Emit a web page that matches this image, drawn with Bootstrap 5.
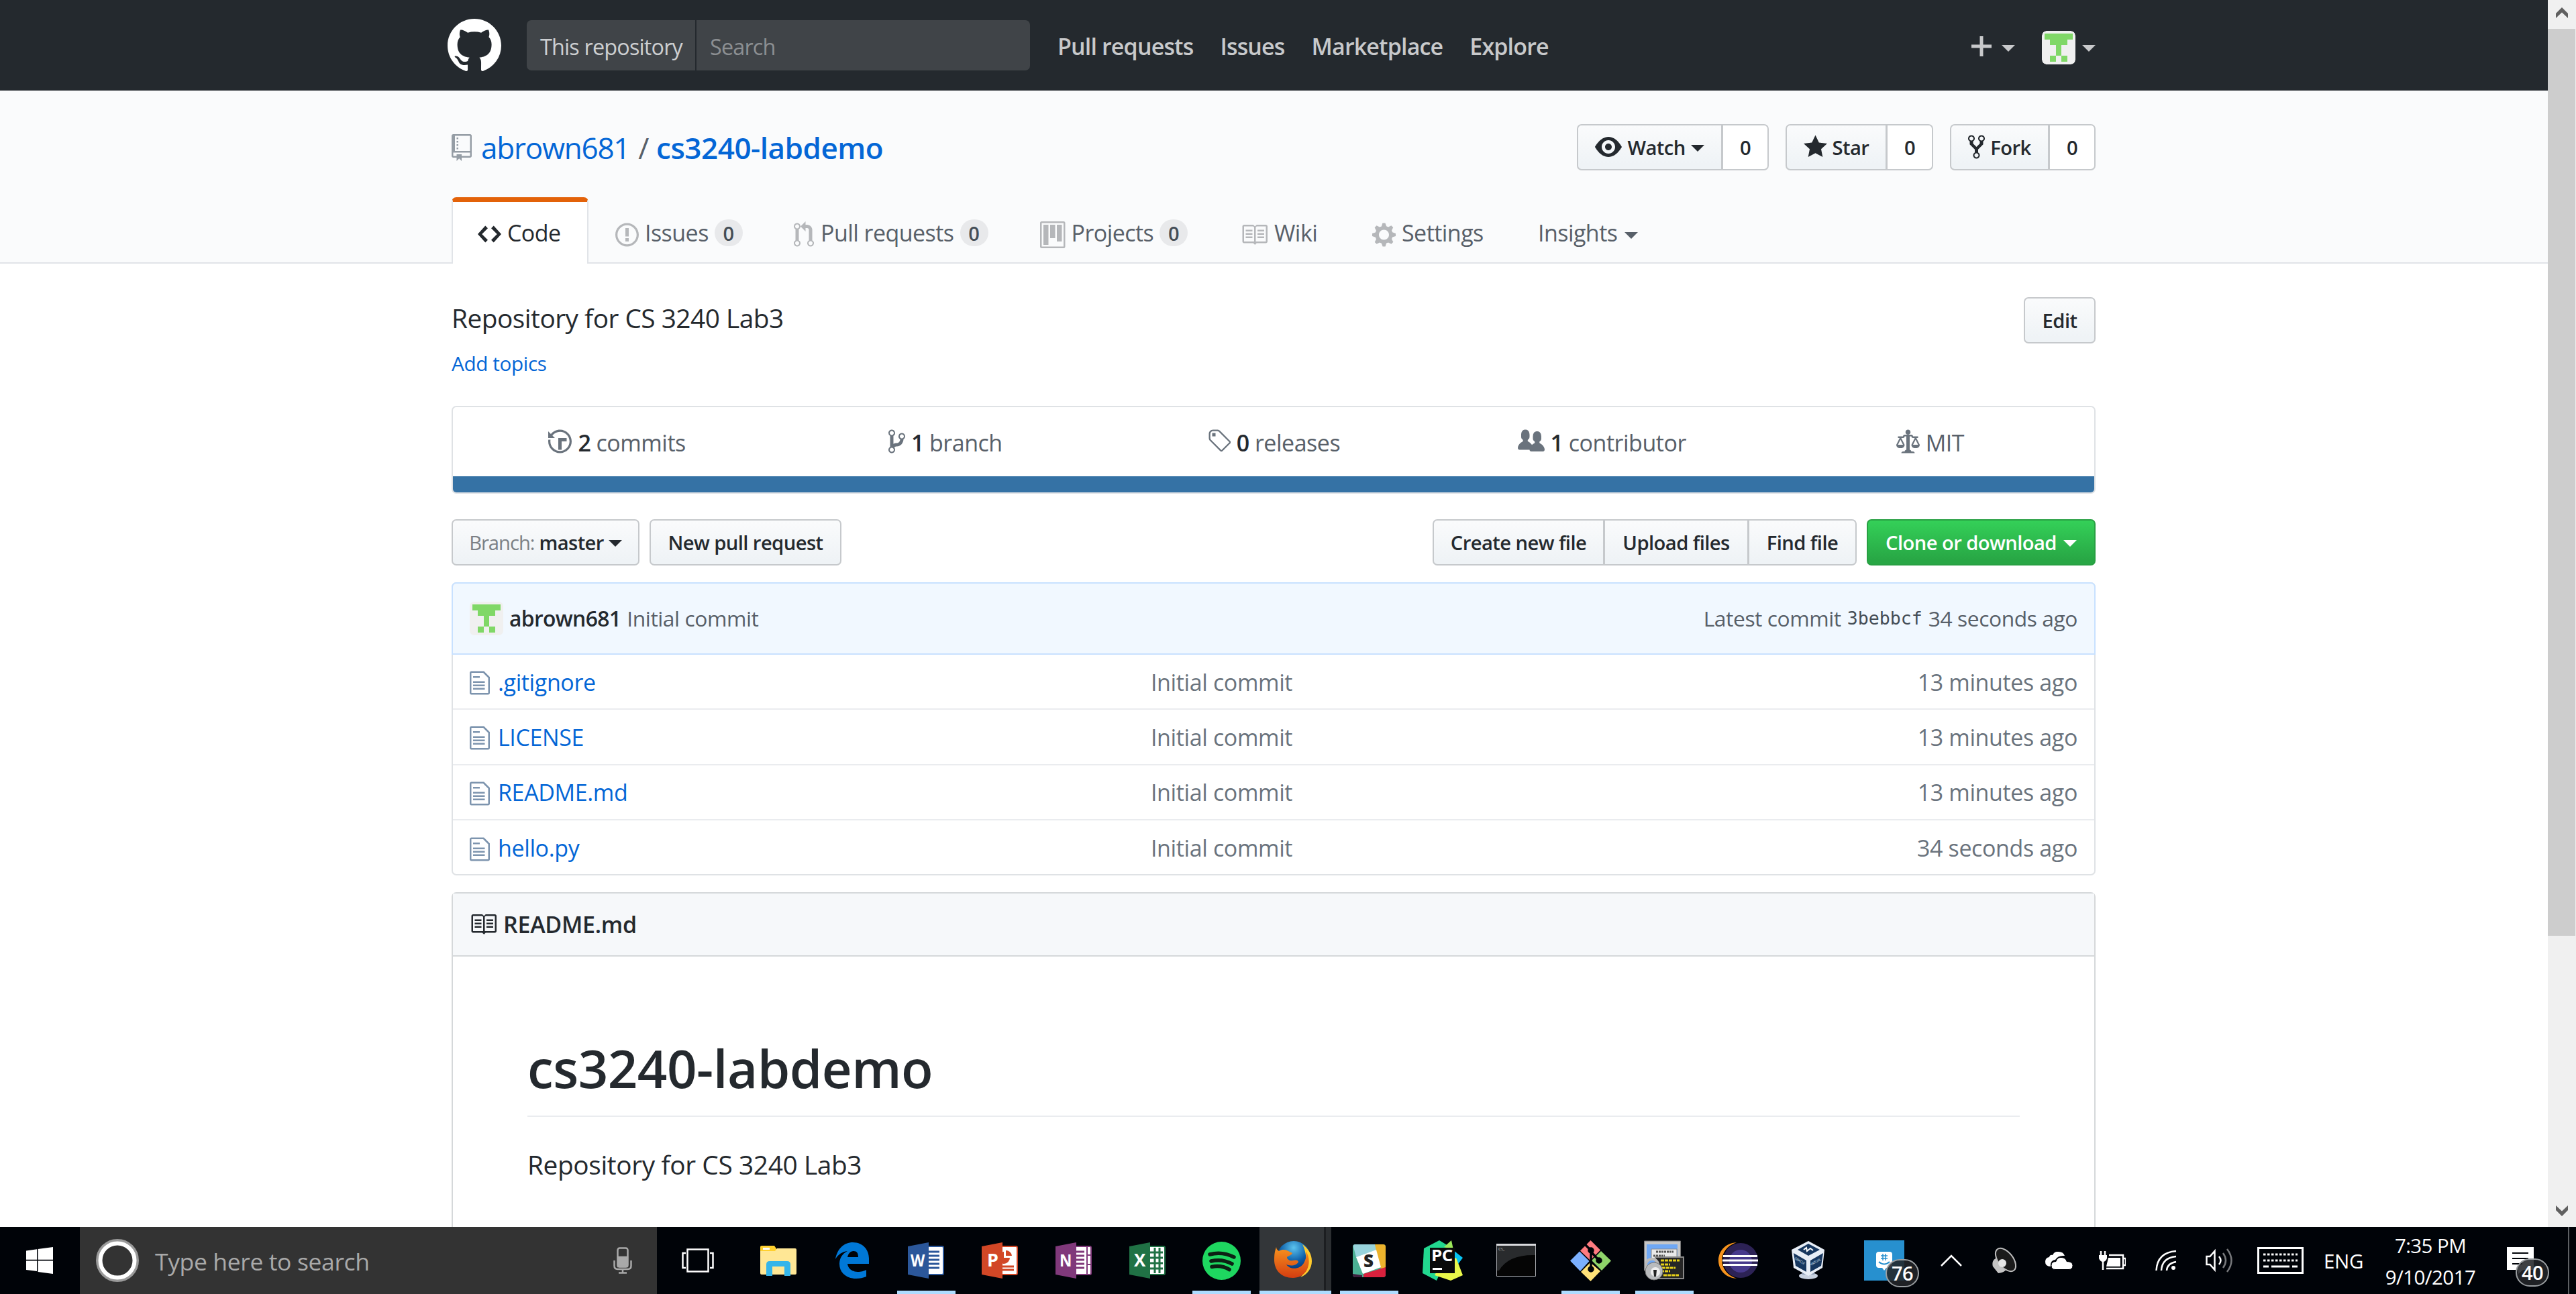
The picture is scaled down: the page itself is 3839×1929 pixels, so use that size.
<!DOCTYPE html>
<html lang="en">
<head>
<meta charset="utf-8">
<title>abrown681/cs3240-labdemo: Repository for CS 3240 Lab3</title>
<link rel="stylesheet" href="https://cdn.jsdelivr.net/npm/bootstrap@5.3.0/dist/css/bootstrap.min.css">
<style>
html,body{height:1929px;overflow:hidden}
body{font-family:"Open Sans","Noto Sans",sans-serif;font-size:34px;line-height:1.5;letter-spacing:-.011em;color:#24292e;background:#fff;white-space:nowrap}
a{text-decoration:none;color:#0366d6}
svg{display:block;flex:none}
svg:not([fill]){fill:currentColor}
.fw-semibold,.btn{letter-spacing:-.02em}
.viewport-area{height:1829px}
.wrap{width:2450px;margin:0 auto 0 673px}
.topbar{height:135px;background:#24292e;color:#c8c9cb}
.topbar-in{width:2460px;margin:0 auto 0 667px;padding-right:4px}
.searchbox{width:750px;height:75px;margin-left:38px;background:#404448;border-radius:7px;font-size:32.4px;letter-spacing:-.026em}
.scope{width:253px;padding:3px 0 0 20px;border-right:2px solid #24292e;color:#cdcfd1}
.query{padding:3px 0 0 20px;color:#8c8f92}
.topnav{margin-left:41px;gap:40px;padding-top:4px}
.topnav.fw-semibold{letter-spacing:-.025em}
.tri{width:0;height:0;border:10px solid transparent;border-top-color:currentColor;border-bottom:0;flex:none}
.face{border-radius:7px}
.repohead{height:258px;background:#fafbfc;border-bottom:2px solid #e1e4e8;padding-top:50px}
.titlerow{height:69px}
.title{font-size:44px;margin-left:14px}
.t-owner{letter-spacing:-.028em}
.t-sep{margin:0 11px 0 13px;color:#586069}
.t-repo.fw-semibold{letter-spacing:-.011em}
.btn{--bs-btn-font-size:29.2px;--bs-btn-font-weight:600;--bs-btn-color:#24292e;--bs-btn-border-color:#c6c9cc;--bs-btn-border-width:2px;--bs-btn-border-radius:7px;--bs-btn-padding-x:0;--bs-btn-padding-y:0;height:69px;padding-top:2px;background:linear-gradient(#fafbfc,#eff3f6 90%);display:flex;align-items:center;justify-content:center;line-height:1}
.btn svg{margin-bottom:3px}
.btn-group>.btn{flex:none}
.btn-tally{background:#fff}
.btn-go{--bs-btn-color:#fff;--bs-btn-border-color:#28a043;background:linear-gradient(#34d058,#28a745 90%)}
.tabs{margin-top:40px;height:99px;color:#586069;letter-spacing:-.016em}
.tab{height:99px;padding-top:7px}
.tab svg{margin-top:6px;color:#b5b7ba}
.tab-on{width:204px;background:#fff;border:2px solid #e1e4e8;border-top:7px solid #e36209;border-bottom:0;border-radius:7px 7px 0 0;padding-top:0;color:#24292e;padding-left:37px}
.tab-on svg{color:#24292e;margin-top:3px}
.tally{width:42px;height:40px;border-radius:20px;background:#e8e9eb;font-size:29px;font-weight:600;line-height:41px;text-align:center;color:#444d56;letter-spacing:0;margin-left:9px}
.about{margin-top:50px;height:69px}
.about-text{font-size:38.8px;line-height:63px;letter-spacing:-.013em}
.topics{font-size:29.7px;line-height:41px;height:40px;margin-top:9px}
.summary{margin-top:44px;height:131px;border:2px solid #dfe2e5;border-radius:7px;overflow:hidden;color:#586069;letter-spacing:-.014em}
.summary svg{margin:3px 9px 0 0;color:#6a737d}
.statline{padding-top:4px}
.langbar{height:24px;background:#3572a5}
.ink{color:#24292e}
.toolrow{margin:38px 0 25px}
.files{border:2px solid #dfe2e5;border-radius:7px;height:437px;color:#6a737d}
.tease{height:108px;margin:-2px -2px 0;background:#f1f8ff;border:2px solid #c8e1ff;border-radius:7px 7px 0 0;padding:0 25px;color:#586069;font-size:31.8px;letter-spacing:-.014em}
.tease>span,.tease>code{padding-bottom:1px}
.tease code{font-family:"DejaVu Sans Mono","Liberation Mono",monospace;font-size:26.6px;letter-spacing:0;color:#444d56}
.frow{height:82.25px;border-bottom:2px solid #eaecef;padding:2px 25px 0}
.frow:last-child{border:0}
.fname{width:1015px;gap:12px}
.fname svg{color:#7d94ae;margin-top:2px}
.readme{margin-top:25px;border:2px solid #d5d8da;border-radius:7px;height:700px}
.readme-h{height:94px;background:#f6f8fa;border-bottom:2px solid #d5d8da;padding-left:25px;gap:10px}
.readme-h.fw-semibold{letter-spacing:-.008em}
.readme-b{padding:116px 111px}
.readme-b h1{font-size:78px;font-weight:600;line-height:100px;height:123px;border-bottom:2px solid #eaecef;margin:0 0 43px;letter-spacing:-.0065em}
.readme-b p{font-size:38.8px;line-height:56px}
.scroller{width:42px;background:#f0f0f0;color:#606060}
.scroller i{width:41px;height:1352px;background:#cdcdcd}
.arrowbox{width:41px;height:43px;padding-bottom:5px}
.taskbar{height:100px;background:#000308;color:#fff}
.start{width:119px}
.cortana{width:860px;background:#333;color:#a9a9a9;font-size:35.5px;padding:0 37px 0 24px}
.app{width:110px;height:100px}
.app.run{background:linear-gradient(#aedcff,#aedcff) 12px 95px/87px 5px no-repeat}
.running{height:5px;background:#aedcff}
.cell{height:100px}
.apps{margin-left:6px}
.front{width:107px;background:linear-gradient(90deg,#333639 0 96px,#1c1e21 96px 99px,#2b2e31 99px)}
.clock{line-height:47px;font-size:29.5px;text-align:center;width:170px;letter-spacing:-.02em}
.bubble{position:absolute;height:42px;border:2px solid #9a9ea1;border-radius:21px;background:rgba(35,38,41,.88);font-size:29px;line-height:37px;font-weight:600;text-align:center;width:50px;letter-spacing:-.02em}
.s80{width:80px}
</style>
</head>
<body>
<svg width="0" height="0" class="position-absolute">
<defs>
<symbol id="book" viewBox="0 0 16 16"><path d="M3 5h4v1H3V5zm0 3h4V7H3v1zm0 2h4V9H3v1zm11-5h-4v1h4V5zm0 2h-4v1h4V7zm0 2h-4v1h4V9zm2-6v9c0 .55-.45 1-1 1H9.5l-1 1-1-1H2c-.55 0-1-.45-1-1V3c0-.55.45-1 1-1h5.5l1 1 1-1H15c.55 0 1 .45 1 1zm-8 .5L7.5 3H2v9h6V3.5zm7-.5H9.5l-.5.5V12h6V3z"/></symbol>
<symbol id="file" viewBox="0 0 12 16"><path d="M6 5H2V4h4v1zM2 8h7V7H2v1zm0 2h7V9H2v1zm0 2h7v-1H2v1zm10-7.5V14c0 .55-.45 1-1 1H1c-.55 0-1-.45-1-1V2c0-.55.45-1 1-1h7.5L12 4.5zM11 5L8 2H1v12h10V5z"/></symbol>
<symbol id="face" viewBox="0 0 50 50"><rect width="50" height="50" rx="7" fill="#f0f0f0"/><path fill="#80d867" d="M4 4h42v9h-8v8h-9v16h9v9h-9v-9h-8v9h-9v-9h9V21h-9v-8H4z"/></symbol>
</defs>
</svg>
<div class="viewport-area d-flex">
<div class="flex-grow-1 overflow-hidden">
<header class="topbar d-flex">
<div class="topbar-in d-flex align-items-center">
<svg width="80" height="80" viewBox="0 0 16 16" fill="#fff"><path d="M8 0C3.58 0 0 3.58 0 8c0 3.54 2.29 6.53 5.47 7.59.4.07.55-.17.55-.38 0-.19-.01-.82-.01-1.49-2.01.37-2.53-.49-2.69-.94-.09-.23-.48-.94-.82-1.13-.28-.15-.68-.52-.01-.53.63-.01 1.08.58 1.23.82.72 1.21 1.87.87 2.33.66.07-.52.28-.87.51-1.07-1.78-.2-3.64-.89-3.64-3.95 0-.87.31-1.59.82-2.15-.08-.2-.36-1.02.08-2.12 0 0 .67-.21 2.2.82.64-.18 1.32-.27 2-.27.68 0 1.36.09 2 .27 1.53-1.04 2.2-.82 2.2-.82.44 1.1.16 1.92.08 2.12.51.56.82 1.27.82 2.15 0 3.07-1.87 3.75-3.65 3.95.29.25.54.73.54 1.48 0 1.07-.01 1.93-.01 2.2 0 .21.15.46.55.38A8.013 8.013 0 0 0 16 8c0-4.42-3.58-8-8-8z"/></svg>
<div class="searchbox d-flex align-items-stretch">
<div class="scope d-flex align-items-center">This repository</div>
<div class="query d-flex align-items-center">Search</div>
</div>
<nav class="topnav d-flex fw-semibold"><span>Pull requests</span><span>Issues</span><span>Marketplace</span><span>Explore</span></nav>
<div class="ms-auto d-flex align-items-center">
<svg style="margin-top:3px" width="30" height="40" viewBox="0 0 12 16"><path d="M12 9H7v5H5V9H0V7h5V2h2v5h5z"/></svg>
<span class="tri mt-2" style="margin-left:15px"></span>
<svg class="face" style="margin:6px 10px 0 40px" width="50" height="50"><use href="#face"/></svg>
<span class="tri mt-2"></span>
</div>
</div>
</header>
<section class="repohead">
<div class="wrap">
<div class="titlerow d-flex align-items-center">
<svg width="30" height="40" viewBox="0 0 12 16" fill="#959da5"><path d="M4 9H3V8h1v1zm0-3H3v1h1V6zm0-2H3v1h1V4zm0-2H3v1h1V2zm8-1v12c0 .55-.45 1-1 1H6v2l-1.5-1.5L3 16v-2H1c-.55 0-1-.45-1-1V1c0-.55.45-1 1-1h10c.55 0 1 .45 1 1zm-1 10H1v2h2v-1h3v1h5v-2zm0-10H2v9h9V1z"/></svg>
<div class="title d-flex"><a href="#" class="t-owner">abrown681</a><span class="t-sep">/</span><a href="#" class="t-repo fw-semibold">cs3240-labdemo</a></div>
<div class="ms-auto d-flex" style="gap:25px">
<div class="btn-group"><button class="btn" style="width:217px;gap:8px"><svg width="40" height="40" viewBox="0 0 16 16"><path d="M8.06 2C3 2 0 8 0 8s3 6 8.06 6C13 14 16 8 16 8s-3-6-7.94-6zM8 12c-2.2 0-4-1.78-4-4 0-2.2 1.8-4 4-4 2.22 0 4 1.8 4 4 0 2.22-1.78 4-4 4zm2-4c0 1.11-.89 2-2 2-1.11 0-2-.89-2-2 0-1.11.89-2 2-2 1.11 0 2 .89 2 2z"/></svg>Watch<span class="tri"></span></button><button class="btn btn-tally" style="width:70px">0</button></div>
<div class="btn-group"><button class="btn" style="width:151px;gap:8px"><svg width="35" height="40" viewBox="0 0 14 16"><path d="M14 6l-4.9-.64L7 1 4.9 5.36 0 6l3.6 3.26L2.67 14 7 11.67 11.33 14l-.93-4.74z"/></svg>Star</button><button class="btn btn-tally" style="width:70px">0</button></div>
<div class="btn-group"><button class="btn" style="width:148px;gap:8px"><svg width="25" height="40" viewBox="0 0 10 16"><path d="M8 1a1.993 1.993 0 0 0-1 3.72V6L5 8 3 6V4.72A1.993 1.993 0 0 0 2 1a1.993 1.993 0 0 0-1 3.72V6.5l3 3v1.78A1.993 1.993 0 0 0 5 15a1.993 1.993 0 0 0 1-3.72V9.5l3-3V4.72A1.993 1.993 0 0 0 8 1zM2 4.2C1.34 4.2.8 3.65.8 3c0-.65.55-1.2 1.2-1.2.65 0 1.2.55 1.2 1.2 0 .65-.55 1.2-1.2 1.2zm3 10c-.66 0-1.2-.55-1.2-1.2 0-.65.55-1.2 1.2-1.2.65 0 1.2.55 1.2 1.2 0 .65-.55 1.2-1.2 1.2zm3-10c-.66 0-1.2-.55-1.2-1.2 0-.65.55-1.2 1.2-1.2.65 0 1.2.55 1.2 1.2 0 .65-.55 1.2-1.2 1.2z"/></svg>Fork</button><button class="btn btn-tally" style="width:70px">0</button></div>
</div>
</div>
<nav class="tabs d-flex">
<div class="tab tab-on d-flex align-items-center"><svg width="35" height="40" viewBox="0 0 14 16" style="margin-right:9px"><path d="M9.5 3L8 4.5 11.5 8 8 11.5 9.5 13 14 8 9.5 3zm-5 0L0 8l4.5 5L6 11.5 2.5 8 6 4.5 4.5 3z"/></svg>Code</div>
<div class="tab d-flex align-items-center" style="width:266px;padding-left:40px"><svg width="35" height="40" viewBox="0 0 14 16" style="margin-right:9px"><path d="M7 2.3c3.14 0 5.7 2.56 5.7 5.7s-2.56 5.7-5.7 5.7A5.71 5.71 0 0 1 1.3 8c0-3.14 2.56-5.7 5.7-5.7zM7 1C3.14 1 0 4.14 0 8s3.14 7 7 7 7-3.14 7-7-3.14-7-7-7zm1 3H6v5h2V4zm0 6H6v2h2v-2z"/></svg>Issues<span class="tally">0</span></div>
<div class="tab d-flex align-items-center" style="width:367px;padding-left:40px"><svg width="30" height="40" viewBox="0 0 12 16" style="margin-right:10px"><path d="M11 11.28V5c-.03-.78-.34-1.47-.94-2.06C9.46 2.35 8.78 2.03 8 2H7V0L4 3l3 3V4h1c.27.02.48.11.69.31.21.2.3.42.31.69v6.28A1.993 1.993 0 0 0 10 15a1.993 1.993 0 0 0 1-3.72zm-1 2.92c-.66 0-1.2-.55-1.2-1.2 0-.65.55-1.2 1.2-1.2.65 0 1.2.55 1.2 1.2 0 .65-.55 1.2-1.2 1.2zM4 3c0-1.11-.89-2-2-2a1.993 1.993 0 0 0-1 3.72v6.56A1.993 1.993 0 0 0 2 15a1.993 1.993 0 0 0 1-3.72V4.72c.59-.34 1-.98 1-1.72zm-.8 10c0 .66-.55 1.2-1.2 1.2-.65 0-1.2-.55-1.2-1.2 0-.65.55-1.2 1.2-1.2.65 0 1.2.55 1.2 1.2zM2 4.2C1.34 4.2.8 3.65.8 3c0-.65.55-1.2 1.2-1.2.65 0 1.2.55 1.2 1.2 0 .65-.55 1.2-1.2 1.2z"/></svg>Pull requests<span class="tally">0</span></div>
<div class="tab d-flex align-items-center" style="width:301px;padding-left:40px"><svg width="37.5" height="40" viewBox="0 0 15 16" style="margin-right:9px"><path fill-rule="evenodd" d="M10 12h3V2h-3v10zm-4-2h3V2H6v8zm-4 4h3V2H2v12zm-1 1h13V1H1v14zM14 0H1a1 1 0 0 0-1 1v14a1 1 0 0 0 1 1h13a1 1 0 0 0 1-1V1a1 1 0 0 0-1-1z"/></svg>Projects<span class="tally">0</span></div>
<div class="tab d-flex align-items-center" style="width:195px;padding-left:38px"><svg width="40" height="40" style="margin-right:10px"><use href="#book"/></svg>Wiki</div>
<div class="tab d-flex align-items-center" style="width:247px;padding-left:39px"><svg width="35" height="40" viewBox="0 0 14 16" style="margin-right:9px"><path d="M14 8.77v-1.6l-1.94-.64-.45-1.09.88-1.84-1.13-1.13-1.81.91-1.09-.45-.69-1.92h-1.6l-.63 1.94-1.11.45-1.84-.88-1.13 1.13.91 1.81-.45 1.09L0 7.23v1.59l1.94.64.45 1.09-.88 1.84 1.13 1.13 1.81-.91 1.09.45.69 1.92h1.59l.63-1.94 1.11-.45 1.84.88 1.13-1.13-.92-1.81.47-1.09L14 8.75v.02zM7 11c-1.66 0-3-1.34-3-3s1.34-3 3-3 3 1.34 3 3-1.34 3-3 3z"/></svg>Settings</div>
<div class="tab d-flex align-items-center" style="padding-left:39px;gap:11px">Insights<span class="tri mt-2"></span></div>
</nav>
</div>
</section>
<main class="wrap">
<div class="about d-flex justify-content-between"><div class="about-text">Repository for CS 3240 Lab3</div><button class="btn" style="width:107px">Edit</button></div>
<div class="topics"><a href="#">Add topics</a></div>
<div class="summary d-flex flex-column">
<div class="statline d-flex flex-grow-1 align-items-center text-center">
<div class="d-flex w-100 justify-content-center"><svg width="35" height="40" viewBox="0 0 14 16"><path d="M8 13H6V6h5v2H8v5zM7 1C4.81 1 2.87 2.02 1.59 3.59L0 2v4h4L2.5 4.5C3.55 3.17 5.17 2.3 7 2.3c3.14 0 5.7 2.56 5.7 5.7s-2.56 5.7-5.7 5.7A5.71 5.71 0 0 1 1.3 8c0-.34.03-.67.09-1H.08C.03 7.33 0 7.66 0 8c0 3.86 3.14 7 7 7s7-3.14 7-7-3.14-7-7-7z"/></svg><span><b class="ink fw-semibold">2</b> commits</span></div>
<div class="d-flex w-100 justify-content-center"><svg width="25" height="40" viewBox="0 0 10 16"><path d="M10 5c0-1.11-.89-2-2-2a1.993 1.993 0 0 0-1 3.72v.3c-.02.52-.23.98-.63 1.38-.4.4-.86.61-1.38.63-.83.02-1.48.16-2 .45V4.72a1.993 1.993 0 0 0-1-3.72C.88 1 0 1.89 0 3a2 2 0 0 0 1 1.72v6.56c-.59.35-1 .99-1 1.72 0 1.11.89 2 2 2 1.11 0 2-.89 2-2 0-.53-.2-1-.53-1.36.09-.06.48-.41.59-.47.25-.11.56-.17.94-.17 1.05-.05 1.95-.45 2.75-1.25S8.95 7.77 9 6.73h-.02C9.59 6.37 10 5.73 10 5zM2 1.8c.66 0 1.2.55 1.2 1.2 0 .65-.55 1.2-1.2 1.2C1.35 4.2.8 3.65.8 3c0-.65.55-1.2 1.2-1.2zm0 12.41c-.66 0-1.2-.55-1.2-1.2 0-.65.55-1.2 1.2-1.2.65 0 1.2.55 1.2 1.2 0 .65-.55 1.2-1.2 1.2zm6-8c-.66 0-1.2-.55-1.2-1.2 0-.65.55-1.2 1.2-1.2.65 0 1.2.55 1.2 1.2 0 .65-.55 1.2-1.2 1.2z"/></svg><span><b class="ink fw-semibold">1</b> branch</span></div>
<div class="d-flex w-100 justify-content-center"><svg width="35" height="40" viewBox="0 0 14 16"><path d="M7.73 1.73C7.26 1.26 6.62 1 5.96 1H3.5C2.13 1 1 2.13 1 3.5v2.47c0 .66.27 1.3.73 1.77l6.06 6.06c.39.39 1.02.39 1.41 0l4.59-4.59a.996.996 0 0 0 0-1.41L7.73 1.73zM2.38 7.09c-.31-.3-.47-.7-.47-1.13V3.5c0-.88.72-1.59 1.59-1.59h2.47c.42 0 .83.16 1.13.47l6.14 6.13-4.73 4.73-6.13-6.15zM3.01 3h2v2H3V3h.01z"/></svg><span><b class="ink fw-semibold">0</b> releases</span></div>
<div class="d-flex w-100 justify-content-center"><svg width="40" height="40" viewBox="0 0 16 16"><path d="M16 12.999c0 .439-.45 1-1 1H7.995c-.539 0-.994-.447-.995-.999H1c-.54 0-1-.561-1-1 0-2.634 3-4 3-4s.229-.409 0-1c-.841-.621-1.058-.59-1-3 .058-2.419 1.367-3 2.5-3s2.442.58 2.5 3c.058 2.41-.159 2.379-1 3-.229.59 0 1 0 1s1.549.711 2.42 2.088C9.196 9.369 10 8.999 10 8.999s.229-.409 0-1c-.841-.62-1.058-.59-1-3 .058-2.419 1.367-3 2.5-3s2.437.581 2.495 3c.059 2.41-.158 2.38-1 3-.229.59 0 1 0 1s3.005 1.366 3.005 4"/></svg><span><b class="ink fw-semibold">1</b> contributor</span></div>
<div class="d-flex w-100 justify-content-center"><svg width="35" height="40" viewBox="0 0 14 16"><path d="M7 4c-.83 0-1.5-.67-1.5-1.5S6.17 1 7 1s1.5.67 1.5 1.5S7.83 4 7 4zm7 6c0 1.11-.89 2-2 2h-1c-1.11 0-2-.89-2-2l2-4h-1c-.55 0-1-.45-1-1H8v8c.42 0 1 .45 1 1h1c.42 0 1 .45 1 1H3c0-.55.58-1 1-1h1c0-.55.58-1 1-1h.03L6 5H5c0 .55-.45 1-1 1H3l2 4c0 1.11-.89 2-2 2H2c-1.11 0-2-.89-2-2l2-4H1V5h3c0-.55.45-1 1-1h4c.55 0 1 .45 1 1h3v1h-1l2 4zM2.5 7L1 10h3L2.5 7zM13 10l-1.5-3-1.5 3h3z"/></svg><span>MIT</span></div>
</div>
<div class="langbar"></div>
</div>
<div class="toolrow d-flex">
<button class="btn" style="width:280px;gap:7px"><span class="fw-normal" style="color:#7b8085;letter-spacing:-.035em">Branch:</span>master<span class="tri"></span></button>
<button class="btn" style="width:286px;margin-left:15px">New pull request</button>
<div class="btn-group ms-auto"><button class="btn" style="width:256px">Create new file</button><button class="btn" style="width:216px">Upload files</button><button class="btn" style="width:162px">Find file</button></div>
<button class="btn btn-go" style="width:341px;margin-left:15px;gap:10px">Clone or download<span class="tri"></span></button>
</div>
<div class="files">
<div class="tease d-flex align-items-center"><svg width="50" height="50" style="margin-right:9px"><use href="#face"/></svg><span class="ink fw-semibold">abrown681</span><span style="margin-left:9px">Initial commit</span><span class="ms-auto">Latest commit</span><code style="margin:0 9px">3bebbcf</code><span>34 seconds ago</span></div>
<div class="frow d-flex align-items-center"><div class="fname d-flex align-items-center"><svg width="30" height="40"><use href="#file"/></svg><a href="#">.gitignore</a></div><span>Initial commit</span><span class="ms-auto">13 minutes ago</span></div>
<div class="frow d-flex align-items-center"><div class="fname d-flex align-items-center"><svg width="30" height="40"><use href="#file"/></svg><a href="#">LICENSE</a></div><span>Initial commit</span><span class="ms-auto">13 minutes ago</span></div>
<div class="frow d-flex align-items-center"><div class="fname d-flex align-items-center"><svg width="30" height="40"><use href="#file"/></svg><a href="#">README.md</a></div><span>Initial commit</span><span class="ms-auto">13 minutes ago</span></div>
<div class="frow d-flex align-items-center"><div class="fname d-flex align-items-center"><svg width="30" height="40"><use href="#file"/></svg><a href="#">hello.py</a></div><span>Initial commit</span><span class="ms-auto">34 seconds ago</span></div>
</div>
<div class="readme">
<div class="readme-h d-flex align-items-center fw-semibold"><svg width="40" height="40"><use href="#book"/></svg>README.md</div>
<div class="readme-b"><h1>cs3240-labdemo</h1><p>Repository for CS 3240 Lab3</p></div>
</div>
</main>
</div>
<div class="scroller d-flex flex-column">
<div class="arrowbox d-flex align-items-center justify-content-center"><svg width="18" height="16"><path d="M0 9l9-9 9 9v7L9 7.500 0 16z"/></svg></div>
<i></i>
<div class="arrowbox d-flex align-items-center justify-content-center mt-auto"><svg width="18" height="16"><path d="M0 0l9 8.500L18 0v7l-9 9-9-9z"/></svg></div>
</div>
</div>
<footer class="taskbar d-flex">
<div class="start d-flex align-items-center justify-content-center" style="padding-right:1px"><svg width="40" height="40"><path d="M0 5.500L16 3.300V18.800H0zM17.500 3L40 0V18.800H17.500zM0 20.500H16V36L0 34zM17.500 20.500H40V40L17.500 37z"/></svg></div>
<div class="cortana d-flex align-items-center"><svg width="64" height="66" fill="none"><circle cx="32" cy="33" r="29.500" stroke="#9a9a9a" stroke-width="5"/><circle cx="32" cy="33" r="25.500" stroke="#fff" stroke-width="6"/></svg><span style="margin-left:24px;padding-top:3px">Type here to search</span>
<svg class="ms-auto" width="28" height="40" fill="none" stroke="#a9a9a9" stroke-width="2.500"><rect x="6.500" y="1.500" width="15" height="28" rx="3"/><path fill="#a9a9a9" d="M7 15h14v14H7z"/><path d="M1.500 20v8q0 5 5 5h15q5 0 5-5v-8M14 33v5M8 38.500h12"/></svg></div>
<div class="apps d-flex">
<div class="app d-flex align-items-center justify-content-center" style="margin-right:10px"><svg width="48" height="36" fill="none" stroke="#fff" stroke-width="2.500"><path d="M8.500 1.500h31v33h-31zM6 7H1.500v22H6M42 7h4.500v22H42"/></svg></div>
<div class="app d-flex align-items-center justify-content-center"><svg width="54" height="46"><path fill="#ffd02e" d="M0 3q0-2 2-2h19l4 6v6H0z"/><path fill="#fff" d="M4 4h10v3H4z"/><path fill="#ffe795" d="M0 9h22l3-4h27q2 0 2 2v35q0 2-2 2H2q-2 0-2-2z"/><path fill="#35b5ea" d="M9 46V29q0-5 5-5h26q5 0 5 5v17h-9V32H18v14z"/></svg></div>
<div class="app d-flex align-items-center justify-content-center"><svg width="50" height="54" viewBox="0 0 50 54" fill="#0078d7"><path d="M0 25C3 9 13 0 26 0c15 0 24 11 24 24v8H18c1 8 8 12 15 12 6 0 9-1 13-3v10c-5 2-9 3-15 3C16 54 6 45 6 32c0-8 4-15 12-19C10 14 4 18 0 25zm18-3h16c0-6-2-9-7-9s-8 4-9 9z"/></svg></div>
<div class="app run d-flex align-items-center justify-content-center"><svg width="54" height="54"><path fill="#fff" stroke="#2b579a" stroke-width="2" d="M28 6h23q2 0 2 2v38q0 2-2 2H28z"/><path stroke="#2b579a" stroke-width="3" d="M30 14h17M30 20h17M30 26h17M30 32h17M30 38h17"/><path fill="#2b579a" d="M0 6L31 0v54L0 48z"/><text x="4" y="36" font-size="25" font-weight="700" fill="#fff" textLength="21" lengthAdjust="spacingAndGlyphs">W</text></svg></div>
<div class="app d-flex align-items-center justify-content-center"><svg width="54" height="54"><path fill="#fff" stroke="#d24726" stroke-width="2" d="M28 6h23q2 0 2 2v38q0 2-2 2H28z"/><path stroke="#d24726" stroke-width="3" d="M31 36h17M31 41h17"/><path fill="#d24726" d="M33 14a9 9 0 1 0 9 9H33zM36 12v8h9a9 9 0 0 0-9-8z"/><path fill="#d24726" d="M0 6L31 0v54L0 48z"/><text x="8" y="36" font-size="27" font-weight="700" fill="#fff">P</text></svg></div>
<div class="app d-flex align-items-center justify-content-center"><svg width="54" height="54"><path fill="#fff" stroke="#80397b" stroke-width="2" d="M28 6h23q2 0 2 2v38q0 2-2 2H28z"/><path stroke="#80397b" stroke-width="3" d="M30 14h13M30 20h13M30 26h13M30 32h13M30 38h13"/><path stroke="#80397b" stroke-width="2" d="M47 6v42M47 19h6M47 33h6"/><path fill="#80397b" d="M0 6L31 0v54L0 48z"/><text x="6" y="36" font-size="25" font-weight="700" fill="#fff" textLength="18" lengthAdjust="spacingAndGlyphs">N</text></svg></div>
<div class="app d-flex align-items-center justify-content-center"><svg width="54" height="54"><path fill="#fff" stroke="#207245" stroke-width="2" d="M28 6h23q2 0 2 2v38q0 2-2 2H28z"/><path stroke="#207245" stroke-width="3" d="M30 15h20M30 23h20M30 31h20M30 39h20M38 8v38M45 8v38"/><path fill="#207245" d="M0 6L31 0v54L0 48z"/><text x="7" y="36" font-size="26" font-weight="700" fill="#fff">X</text></svg></div>
<div class="app run d-flex align-items-center justify-content-center"><svg width="57" height="57"><circle cx="28.500" cy="28.500" r="28.500" fill="#1ed760"/><path fill="none" stroke="#0d2014" stroke-linecap="round" stroke-width="5.500" d="M11 19q18-5 36 4M13 29q16-4 31 4M14 37.500q14-3 26 4"/></svg></div>
<div class="app d-flex" style="padding-left:2px"><div class="front d-flex flex-column"><svg style="margin:21px 0 0 22px" width="56" height="56"><defs><radialGradient id="ffb" cx=".5" cy=".2" r=".7"><stop offset="0" stop-color="#5cc3ee"/><stop offset=".6" stop-color="#0a5ca8"/><stop offset="1" stop-color="#0a2f6b"/></radialGradient><linearGradient id="ffo" x2="0" y2="1"><stop offset="0" stop-color="#f7931e"/><stop offset="1" stop-color="#d43d10"/></linearGradient></defs><circle cx="29" cy="25" r="25" fill="url(#ffb)"/><path fill="#ffcb2e" d="M42 5c9 6 14 15 14 25 0 10-6 20-17 24 8-8 11-16 9-26-1-8-2-15-6-23z"/><path fill="url(#ffo)" d="M3 9c0 3 2 5 4 6 5-3 10-2 14 0l6 3c-1 3-6 4-8 6 0 4 5 6 9 5 4-1 7-1 8 2-3 7-14 6-18 4 6 9 21 7 26-2 4-7 4-12 3-18 10 14 4 40-19 40C10 55 0 43 0 28 0 19 1 15 3 9z"/></svg><div class="running w-100 mt-auto"></div></div></div>
<div class="app run d-flex align-items-center justify-content-center"><svg width="49" height="49"><clipPath id="sl"><rect width="49" height="49" rx="4"/></clipPath><g clip-path="url(#sl)"><path fill="#4bb093" d="M0 0h49v49H0z"/><path fill="#98d4dc" d="M0 0h33l3 8L5 19z"/><path fill="#ecb32d" d="M33 0h16v40l-9-6z"/><path fill="#d9213d" d="M16 44l33-10v15H16z"/><path fill="#40203f" d="M0 44l14 2v3H0z"/><path fill="#fff" d="M5 19l30-11 7 26-27 10z"/></g><text x="16" y="34" font-size="26" font-weight="800" fill="#222">S</text></svg></div>
<div class="app d-flex align-items-center justify-content-center"><svg width="60" height="60"><path fill="#22d88f" d="M2 12L25 0l18 11-22 49L0 49z"/><path fill="#9ce85b" d="M32 10L43 0l3 14z"/><path fill="#07c3f2" d="M45 14l15 12-12 16z"/><path fill="#eaf84a" d="M50 26l10 26-18 8-24-8 8-14z"/><path fill="#0a0a0a" d="M11 11h37v38H11z"/><text x="13" y="31" font-size="24" font-weight="700" fill="#fff" textLength="32" lengthAdjust="spacingAndGlyphs">PC</text><path fill="#fff" d="M15 41h14v3H15z"/></svg></div>
<div class="app d-flex align-items-center justify-content-center"><svg width="60" height="50"><path fill="#050505" stroke="#a9abb0" d="M.5.5h58v48H.5z"/><path fill="#292b2d" d="M1 3h57v14Q18 16 4 40H1z"/><path fill="#d9dadd" d="M0 0h59v3H0z"/><text x="3" y="10" font-size="6" fill="#ccc">C:\_</text></svg></div>
<div class="app run d-flex align-items-center justify-content-center"><svg width="61" height="61"><path fill="#ff7b80" d="M15 15.500L30.500 0 45 14.500 30 30z"/><path fill="#7bb0ff" d="M14 16.500L28.500 31 15 46 0 30.500z"/><path fill="#8fd46a" d="M46 16l15 14.500L47 45 32 30z"/><path fill="#ffe278" d="M30 33l15 13-14.500 15L16 47z"/><g fill="#000308" stroke="#000308" stroke-width="3.500"><path fill="none" d="M22 6l9 9v27M31 17l12 13"/><circle cx="31" cy="15" r="3"/><circle cx="31" cy="43" r="3"/><circle cx="43" cy="30" r="3"/></g></svg></div>
<div class="app run d-flex align-items-center justify-content-center"><svg width="60" height="60"><path fill="#c6c6c6" stroke="#777" d="M.5 1h54v44H.5z"/><path fill="#6fa8f5" d="M4 6h46v36H4z"/><path fill="#e9e9e9" stroke="#888" d="M11 13h38v14H11z"/><path stroke="#555" stroke-width="3" stroke-dasharray="3 1" d="M18 17h26M14 23h17"/><path fill="#262626" stroke="#888" stroke-width="2" d="M17 25h42v32H17z"/><path stroke="#e6cf19" stroke-width="3" stroke-dasharray="5 1" d="M25 30h28M25 36h14M27 41h20M25 46h14M29 52h24"/><path fill="none" stroke="#bbb" stroke-width="4" d="M3 40v-5q2-7 9-7t9 7v8"/><circle cx="15" cy="46" r="13" fill="#b9bbbd" stroke="#777"/><circle cx="17" cy="47" r="7" fill="#eee"/><path fill="#222" d="M14 44h5l-1 10h-3z"/></svg></div>
<div class="app d-flex align-items-center justify-content-center"><svg width="59" height="54"><path fill="#f7941e" d="M27 0C-9 3-9 51 27 54-2 44-2 10 27 0z"/><circle cx="33" cy="27" r="26" fill="#2c2255"/><circle cx="33" cy="28" r="17" fill="#47398c"/><path stroke="#fff" stroke-width="3" d="M7 20.500h51M6 27h53M7 33.500h51"/></svg></div>
<div class="app d-flex align-items-center justify-content-center"><svg style="margin-right:10px" width="50" height="58"><ellipse cx="25" cy="52" rx="14" ry="5" fill="#c9d2e0"/><path fill="#8b9bb5" d="M16 38h18v12H16z"/><path fill="#e8eef6" d="M25 0l24 13-3 27-21 12L3 40 0 13z"/><path fill="#17375f" d="M25 4l17 9-17 9L9 13zM3 18l19 11v17L6 37zM47 18L28 29v17l16-9z"/><path fill="none" stroke="#fff" stroke-width="2" d="M18 13l4-3 1 5 5-4 4 3"/><text font-size="5" fill="#d5e0ee" transform="translate(4 27) rotate(30)">ORACLE</text><text font-size="5" fill="#d5e0ee" transform="translate(29 37) rotate(-30)">VIRTUAL</text></svg></div>
<div class="app d-flex align-items-center justify-content-center position-relative"><svg style="margin-right:5px" width="60" height="60"><path fill="#2790cf" d="M0 0h60v60H0z"/><path fill="#fff" d="M22 17h16q4 0 4 4v16q0 4-4 4h-5l-3 4-3-4h-5q-4 0-4-4V21q0-4 4-4z"/><path fill="none" stroke="#2790cf" stroke-width="1.500" d="M28 20v10M32 20v10M25 23h10M25 27h10"/><path fill="none" stroke="#2790cf" stroke-width="2" d="M22 32q8 7 16 0"/></svg><span class="bubble" style="left:55px;top:48px">76</span></div>
</div>
<div class="ms-auto d-flex">
<div class="cell s80 d-flex align-items-center justify-content-center"><svg width="32" height="18" fill="none" stroke="#fff" stroke-width="2.500"><path d="M1 17L16 2l15 15"/></svg></div>
<div class="cell s80 d-flex align-items-center justify-content-center"><svg width="42" height="42"><path fill="#c4c4c4" d="M3 30q-3-10 8-14l12 14q2 8-12 10z"/><ellipse cx="22" cy="20" rx="11" ry="20" fill="#1b1b1b" stroke="#bdbdbd" stroke-width="2" transform="rotate(-38 22 20)"/><circle cx="17" cy="25" r="6" fill="#e5e5e5"/></svg></div>
<div class="cell s80 d-flex align-items-center justify-content-center"><svg width="41" height="27"><path fill="#fff" d="M8 22q-8 0-8-7 0-6 6-7 1-4 5-3 3-6 9-5 7 0 9 6-10-1-14 6-8 1-7 10z"/><path fill="#fff" stroke="#000308" d="M15 26.500q-6 0-6-6t7-6q2-7 9-6 6 1 7 6 9 0 9 6t-6 6z"/></svg></div>
<div class="cell s80 d-flex align-items-center justify-content-center"><svg width="40" height="28" fill="none" stroke="#fff" stroke-width="2.500"><path d="M15 6h21v20H11M37 11h3v10h-3M3 0v7M9 0v7M6 14v14"/><path fill="#fff" stroke="none" d="M0 6h12v5q-2 5-6 5t-6-5zM14 10h18v13H11z"/></svg></div>
<div class="cell s80 d-flex align-items-center justify-content-center"><svg width="32" height="32" fill="none" stroke="#fff" stroke-width="2.500"><path d="M1.500 31Q3 4 31 2M9 31q1-19 22-21M17 31q1-11 14-13"/><circle cx="27" cy="27" r="3" fill="#fff" stroke="none"/></svg></div>
<div class="cell s80 d-flex align-items-center justify-content-center"><svg width="42" height="38" fill="none" stroke="#fff" stroke-width="2.500"><path d="M1.500 13h5l7-8v28l-7-8h-5zM20 13q5 6 0 12"/><path stroke="#77797c" d="M26 8q8 11 0 22M32 2q13 17 0 34"/></svg></div>
<div class="cell d-flex align-items-center justify-content-center" style="width:100px"><svg width="69" height="40" fill="none" stroke="#fff" stroke-width="3"><path d="M1.500 1.500h66v37h-66z"/><path stroke-dasharray="3.500 2.500" d="M9 11h51M9 20h51"/><path d="M9 29h8M21 29h27M52 29h8"/></svg></div>
<div class="cell d-flex align-items-center justify-content-center" style="width:89px;font-size:29.500px;padding-top:2px">ENG</div>
<div class="clock pt-1"><div>7:35 PM</div><div>9/10/2017</div></div>
<div class="cell position-relative" style="width:120px"><svg style="margin:30px 0 0 29px" width="40" height="40"><path fill="#fff" d="M0 0h40v34H24l-7 6v-6H0z"/><path stroke="#000308" stroke-width="2" d="M8 9h24M8 17h24M8 25h15"/></svg><span class="bubble" style="left:42px;top:47px">40</span></div>
<div class="cell" style="width:12px;border-left:2px solid #5d6063"></div>
</div>
</footer>
<script src="https://cdn.jsdelivr.net/npm/bootstrap@5.3.0/dist/js/bootstrap.bundle.min.js"></script>
</body>
</html>
